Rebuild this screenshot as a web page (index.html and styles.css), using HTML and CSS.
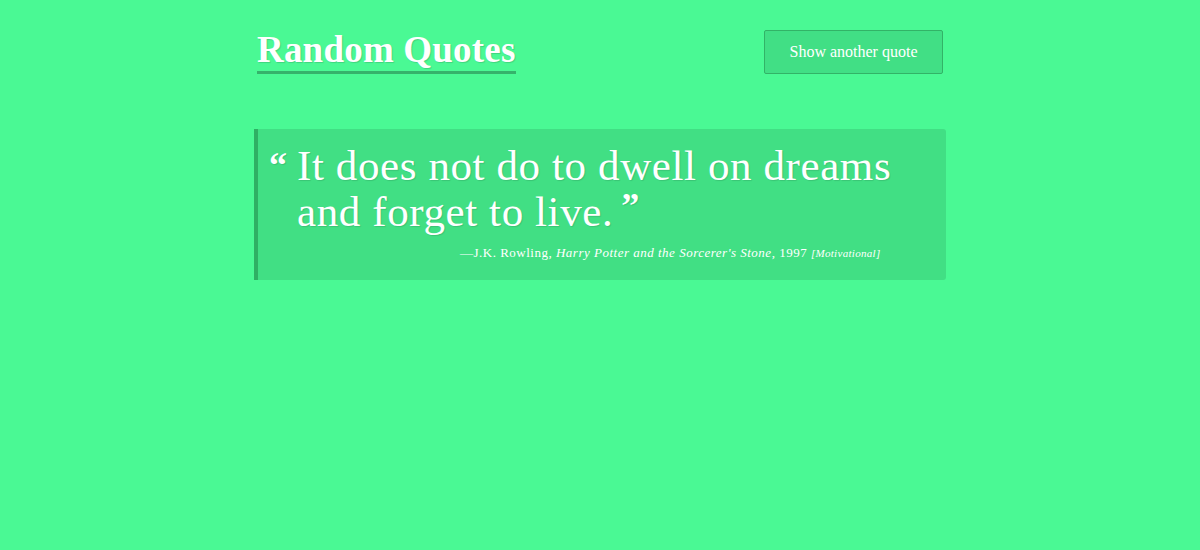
FILE: index.html
```html
<!DOCTYPE html>
<html>
<head>
<meta charset="utf-8">
<link rel="stylesheet" href="styles.css">
</head>
<body>
<div class="container">
  <header class="header">
    <h1 class="title">Random Quotes</h1>
    <button class="btn">Show another quote</button>
  </header>
  <blockquote class="quote">
    <p class="quote-text"><span class="mark open">&#8220;</span>It does not do to dwell on dreams and forget to live.<span class="mark close">&#8221;</span></p>
    <p class="cite">&mdash;J.K. Rowling, <em>Harry Potter and the Sorcerer's Stone</em>, 1997 <em class="tag">[Motivational]</em></p>
  </blockquote>
</div>
</body>
</html>
```
FILE: styles.css
```css
html, body {
  margin: 0;
  padding: 0;
}
body {
  background: #4af994;
  color: #ffffff;
  font-family: "Liberation Serif", "DejaVu Serif", serif;
  height: 550px;
}
.container {
  width: 692px;
  margin: 0 auto;
}
.header {
  display: flex;
  justify-content: space-between;
  align-items: flex-start;
  padding-top: 29px;
}
.title {
  margin: 0 0 0 3px;
  font-size: 37px;
  font-weight: 700;
  line-height: 42px;
  letter-spacing: 0.2px;
  border-bottom: 3px solid #35b36b;
  text-shadow: 1px 1px 1px rgba(0,0,0,0.15);
}
.btn {
  margin: 1px 3px 0 0;
  width: 179px;
  height: 44px;
  background: #41df85;
  border: 1px solid #32b367;
  border-radius: 2px;
  color: #ffffff;
  font-family: "Liberation Serif", serif;
  font-size: 16px;
}
.quote {
  margin: 55px 0 0 0;
  background: #41df84;
  border-left: 4px solid #2fb064;
  border-radius: 0 3px 3px 0;
  padding: 14px 40px 19px 39px;
}
.quote-text {
  margin: 0;
  font-size: 43px;
  line-height: 45px;
  letter-spacing: 0.6px;
  position: relative;
  text-shadow: 1px 1px 1px rgba(0,0,0,0.12);
}
.mark {
  font-weight: 700;
  font-size: 36px;
  line-height: 1;
  letter-spacing: 0;
}
.mark.open {
  position: absolute;
  left: -28px;
  top: 4px;
}
.mark.close {
  margin-left: 8px;
  vertical-align: 8px;
}
.cite {
  margin: 11px 0 0 0;
  font-size: 13px;
  line-height: 16px;
  padding-left: 163px;
  letter-spacing: 0.5px;
}
.cite .tag {
  font-size: 11px;
  letter-spacing: 0.3px;
}
```
